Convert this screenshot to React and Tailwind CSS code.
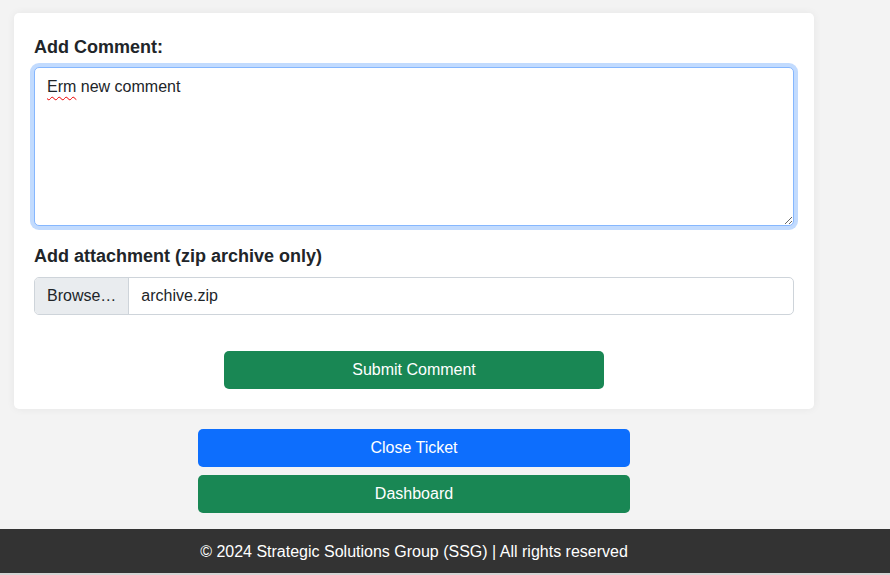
import React from 'react';

const App = () => {
  return (
    <div className="min-h-[575px] bg-[#f3f3f3] font-['Liberation_Sans',Arial,sans-serif] text-[#212529]">
      <div className="w-[828px] pt-[13px]">
        {/* Comment card */}
        <div className="mx-[14px] bg-white rounded-[5px] shadow-[0_0_8px_rgba(0,0,0,0.06)] px-5 pt-5 pb-5">
          <label className="block text-[18px] font-bold leading-[27px] pt-[1px] mb-[6px]">Add Comment:</label>
          <div className="relative">
            <textarea
              defaultValue="Erm new comment"
              spellCheck={false}
              className="block w-full h-[159px] resize-y rounded-[5px] border border-[#86b7fe] bg-white px-3 pt-[7px] pb-[5px] text-[16px] leading-6 text-[#212529] outline-none shadow-[0_0_0_4px_rgba(13,110,253,0.25)]"
            />
            <span className="pointer-events-none absolute left-[13px] top-[8px] text-[16px] leading-6 text-transparent underline decoration-wavy decoration-[#e00] decoration-1 underline-offset-[4px]">
              Erm
            </span>
          </div>

          <label className="block text-[18px] font-bold leading-[27px] mt-[17px] mb-[7px]">Add attachment (zip archive only)</label>
          <div className="flex h-[38px] rounded-[5px] border border-[#ced4da] overflow-hidden text-[16px]">
            <div className="flex items-center px-3 bg-[#e9ecef] border-r border-[#ced4da] text-[#212529]">Browse…</div>
            <div className="flex items-center px-3 text-[#212529]">archive.zip</div>
          </div>

          <div className="flex justify-center mt-9">
            <button className="w-[380px] h-[38px] rounded-[5px] bg-[#198754] text-white text-[16px]">Submit Comment</button>
          </div>
        </div>

        {/* Actions */}
        <div className="flex flex-col items-center gap-2 mt-5">
          <button className="w-[432px] h-[38px] rounded-[5px] bg-[#0d6efd] text-white text-[16px]">Close Ticket</button>
          <button className="w-[432px] h-[38px] rounded-[5px] bg-[#198754] text-white text-[16px]">Dashboard</button>
        </div>
      </div>

      {/* Footer */}
      <footer className="mt-4 h-[44px] bg-[#333333] text-white border-b-2 border-[#d4d4d4] box-content">
        <div className="w-[828px] h-full flex items-center justify-center text-[16px] pt-[1px]">
          © 2024 Strategic Solutions Group (SSG) | All rights reserved
        </div>
      </footer>
    </div>
  );
};

export default App;
